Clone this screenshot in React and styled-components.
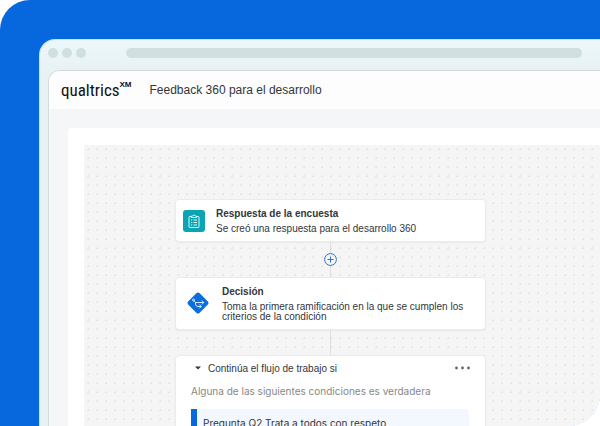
import styled, { createGlobalStyle } from "styled-components";

const GlobalStyle = createGlobalStyle`
  * {
    box-sizing: border-box;
  }
  body {
    margin: 0;
    background-color: #ffffff;
    font-family: "Liberation Sans", sans-serif;
    color: #32363a;
  }
  h1, h2, p {
    margin: 0;
  }
  button {
    padding: 0;
    border: 0;
    background: none;
    color: inherit;
    font: inherit;
  }
  svg {
    display: block;
    flex: none;
  }
`;

const Stage = styled.div`
  display: flex;
  height: 100vh;
  padding: 39px 0 0 39px;
  overflow: hidden;
  background-color: #0768dd;
  border-radius: 30px 0 32px 0;
`;

const BrowserWindow = styled.div`
  flex: 1;
  display: flex;
  flex-direction: column;
  min-width: 0;
  padding-left: 8px;
  border: solid #c3e4f6;
  border-width: 1px 0 0 1px;
  border-radius: 16px 0 0 0;
  background: linear-gradient(#ecf7fa, #e8f2f5 32px);
`;

const BrowserBar = styled.div`
  display: flex;
  align-items: center;
  height: 30px;
  padding: 0 18px 4px 0;
`;

const Dots = styled.div`
  display: flex;
  gap: 4px;
  margin-right: 40px;
`;

const Dot = styled.span`
  width: 10px;
  height: 10px;
  border-radius: 50%;
  background-color: #d0e0e1;
`;

const AddressBar = styled.div`
  flex: 1;
  height: 10px;
  border-radius: 5px;
  background-color: #d0e0e1;
`;

const Page = styled.div`
  flex: 1;
  display: flex;
  flex-direction: column;
  min-height: 0;
  border: solid #d3dbde;
  border-width: 1px 0 0 1px;
  border-radius: 12px 0 0 0;
  background-color: #f5f6f8;
  overflow: hidden;
`;

const Header = styled.header`
  display: flex;
  align-items: center;
  gap: 18px;
  flex: none;
  height: 38px;
  padding-left: 12px;
  background-color: #fdfdfd;
`;

const Logo = styled.div`
  display: flex;
  align-items: flex-start;
  color: #111111;
  font-family: "Roboto Condensed", Roboto, sans-serif;
  font-size: 17px;
  line-height: 20px;
`;

const LogoMark = styled.span`
  font-family: "Liberation Sans", sans-serif;
  font-size: 8px;
  font-weight: 700;
  line-height: 10px;
`;

const PageTitle = styled.h1`
  font-size: 12px;
  font-weight: 400;
  line-height: 16px;
`;

const Panel = styled.main`
  flex: 1;
  display: flex;
  min-height: 0;
  margin: 19px 0 0 19px;
  padding: 17px 0 0 16px;
  border-radius: 4px 0 0 0;
  background-color: #ffffff;
`;

const Canvas = styled.div`
  flex: 1;
  min-width: 0;
  padding: 54px 114px 0 91px;
  background-color: #f5f5f5;
  background-image: radial-gradient(circle, #e4e4e4 1px, transparent 1px);
  background-size: 9px 9px;
`;

const Card = styled.section`
  border: 1px solid #ebebeb;
  border-radius: 4px;
  background-color: #ffffff;
  box-shadow: 0 1px 2px rgba(0, 0, 0, 0.05);
`;

const StepCard = styled(Card)`
  display: flex;
  align-items: center;
  gap: ${(p) => p.$gap};
  padding: ${(p) => p.$padding};
`;

const CardTitle = styled.h2`
  font-size: 10px;
  font-weight: 700;
  line-height: 15px;
`;

const CardText = styled.p`
  margin-top: ${(p) => (p.$tight ? "3px" : "0")};
  font-size: 10px;
  line-height: ${(p) => (p.$tight ? "10px" : "15px")};
`;

const IconTile = styled.div`
  flex: none;
  display: flex;
  align-items: center;
  justify-content: center;
  width: 22px;
  height: 22px;
  border-radius: 3px;
  background-color: #0aa5b4;
`;

const Connector = styled.div`
  display: flex;
  align-items: center;
  justify-content: center;
  height: ${(p) => p.$height};
  background: linear-gradient(#dedede, #dedede) center / 1px 100% no-repeat;
`;

const AddButton = styled.button`
  border-radius: 50%;
  background-color: #f5f5f5;
`;

const BranchHeader = styled.div`
  display: flex;
  align-items: center;
  justify-content: space-between;
  height: 24px;
  padding: 0 15px 0 19px;
`;

const ToggleButton = styled.button`
  display: flex;
  align-items: center;
  gap: 7px;
  font-size: 10px;
  line-height: 15px;
`;

const BranchBody = styled.div`
  padding: 4px 16px 16px 15px;
`;

const Hint = styled.p`
  color: #888888;
  font-family: Inter, sans-serif;
  font-size: 10px;
  line-height: 15px;
`;

const Condition = styled.p`
  margin-top: 10px;
  padding: 7px 0 8px 6px;
  border-left: 6px solid #0768dd;
  border-radius: 0 4px 4px 0;
  background-color: #f2f8fd;
  font-family: Inter, sans-serif;
  font-size: 10px;
  line-height: 15px;
`;

function ClipboardIcon() {
  return (
    <svg width="14" height="14" viewBox="0 0 14 14" fill="none" stroke="#d9f8fa">
      <path
        d="M4.5 2.5H3a1 1 0 0 0-1 1v9a1 1 0 0 0 1 1h8a1 1 0 0 0 1-1v-9a1 1 0 0 0-1-1H9.500M4.5 3.500V2h1.200a1.400 1.400 0 0 1 2.600 0h1.200v1.500z"
        strokeLinejoin="round"
      />
      <path d="M4 6h1.200M4 8.500h1.200M4 11h1.200M6.500 6H10M6.500 8.500H10M6.500 11H10" />
    </svg>
  );
}

function DecisionIcon() {
  return (
    <svg width="24" height="24" viewBox="0 0 24 24">
      <rect x="4" y="4" width="16" height="16" rx="2" fill="#0b6edb" transform="rotate(45 12 12)" />
      <g fill="none" stroke="#cfe7ff" strokeLinecap="round" strokeLinejoin="round">
        <circle cx="7.500" cy="9" r="1" />
        <path d="M8 10c.4 1 1 1.500 2 1.500h7.500M16 9.800l1.700 1.700-1.700 1.700" />
        <path d="M9.500 11.500v1.500a2.500 2.500 0 0 0 2.500 2.500h3M13.500 13.800l1.700 1.700-1.700 1.700" />
      </g>
    </svg>
  );
}

function PlusIcon() {
  return (
    <svg width="13" height="13" viewBox="0 0 13 13" fill="none" stroke="#2b74cf">
      <circle cx="6.500" cy="6.500" r="5.900" />
      <path d="M6.500 3.500v6M3.500 6.500h6" />
    </svg>
  );
}

function CaretIcon() {
  return (
    <svg width="6" height="4" viewBox="0 0 6 4">
      <path d="M0 .5h6L3 3.500z" fill="#32363a" />
    </svg>
  );
}

function MoreIcon() {
  return (
    <svg width="15" height="4" viewBox="0 0 15 4" fill="#666666">
      <circle cx="1.500" cy="2" r="1.400" />
      <circle cx="7.500" cy="2" r="1.400" />
      <circle cx="13.500" cy="2" r="1.400" />
    </svg>
  );
}

export default function App() {
  return (
    <>
      <GlobalStyle />
      <Stage>
        <BrowserWindow>
          <BrowserBar>
            <Dots>
              <Dot />
              <Dot />
              <Dot />
            </Dots>
            <AddressBar />
          </BrowserBar>
          <Page>
            <Header>
              <Logo>
                qualtrics<LogoMark>XM</LogoMark>
              </Logo>
              <PageTitle>Feedback 360 para el desarrollo</PageTitle>
            </Header>
            <Panel>
              <Canvas>
                <StepCard $gap="11px" $padding="6px 7px 5px">
                  <IconTile>
                    <ClipboardIcon />
                  </IconTile>
                  <div>
                    <CardTitle>Respuesta de la encuesta</CardTitle>
                    <CardText>Se creó una respuesta para el desarrollo 360</CardText>
                  </div>
                </StepCard>
                <Connector $height="35px">
                  <AddButton type="button" aria-label="Agregar">
                    <PlusIcon />
                  </AddButton>
                </Connector>
                <StepCard $gap="12px" $padding="6px 10px 7px">
                  <DecisionIcon />
                  <div>
                    <CardTitle>Decisión</CardTitle>
                    <CardText $tight>
                      Toma la primera ramificación en la que se cumplen los criterios de la condición
                    </CardText>
                  </div>
                </StepCard>
                <Connector $height="25px" />
                <Card>
                  <BranchHeader>
                    <ToggleButton type="button" aria-expanded="true">
                      <CaretIcon />
                      Continúa el flujo de trabajo si
                    </ToggleButton>
                    <button type="button" aria-label="Más opciones">
                      <MoreIcon />
                    </button>
                  </BranchHeader>
                  <BranchBody>
                    <Hint>Alguna de las siguientes condiciones es verdadera</Hint>
                    <Condition>Pregunta Q2 Trata a todos con respeto</Condition>
                  </BranchBody>
                </Card>
              </Canvas>
            </Panel>
          </Page>
        </BrowserWindow>
      </Stage>
    </>
  );
}
